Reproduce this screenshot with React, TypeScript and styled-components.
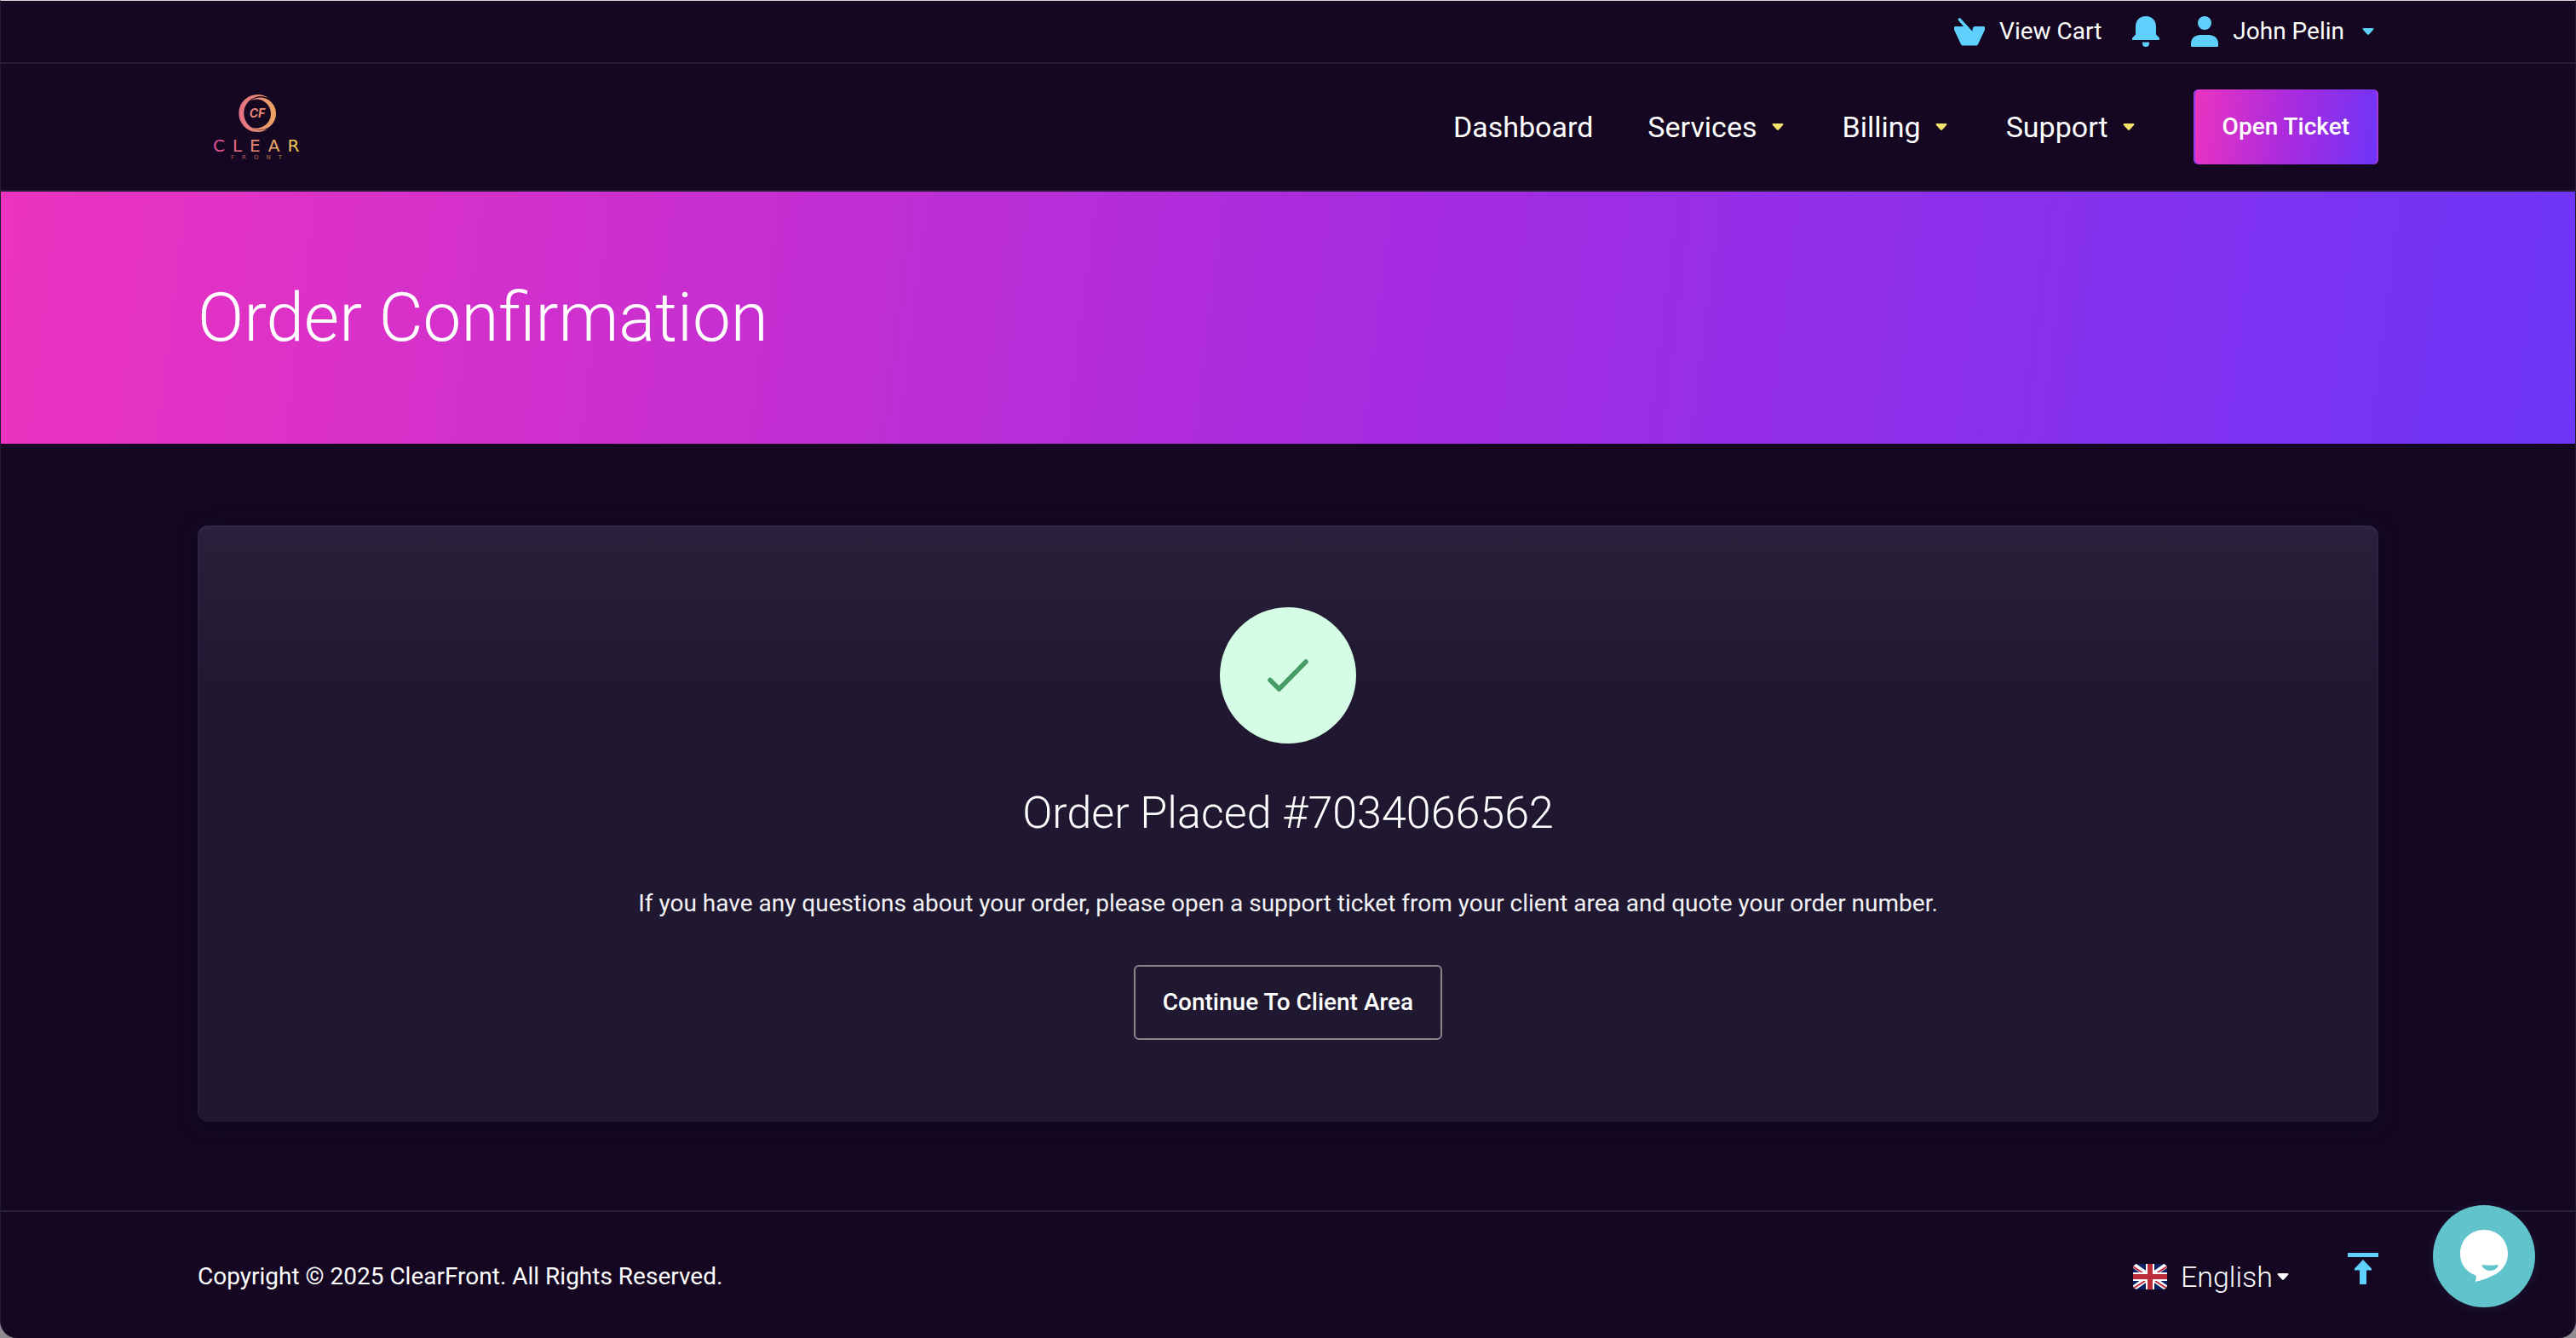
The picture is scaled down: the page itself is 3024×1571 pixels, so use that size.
import React from 'react';
import styled, { createGlobalStyle } from 'styled-components';

const GlobalStyle = createGlobalStyle`
  * { box-sizing: border-box; }
  html { background: #8d8a92; }
  body {
    margin: 0;
    font-family: Roboto, "Liberation Sans", sans-serif;
    font-size: 28px;
    line-height: 40px;
    color: #fff;
    -webkit-font-smoothing: antialiased;
  }
  a { color: inherit; text-decoration: none; }
  button { font: inherit; color: inherit; }
`;

const brandGradient = 'linear-gradient(97deg, #ec33c0 0%, #a62be0 54%, #6e35f8 100%)';

const Page = styled.div`
  display: flex;
  flex-direction: column;
  min-height: 100vh;
  overflow: hidden;
  background: #150722;
  border: 1px solid #251a33;
  border-top-color: #d5d7da;
  border-bottom: 0;
  border-radius: 0 0 20px 20px;
`;

const Container = styled.div`
  display: flex;
  align-items: center;
  width: 100%;
  max-width: 2688px;
  margin: 0 auto;
  padding: 0 64px;
`;

const TopBar = styled.div`
  border-bottom: 2px solid #251b38;
`;

const TopRow = styled(Container)`
  justify-content: flex-end;
  gap: 34px;
  height: 72px;
`;

const TopLink = styled.a`
  display: flex;
  align-items: center;
  gap: 16px;
`;

const TopButton = styled.button`
  display: flex;
  align-items: center;
  gap: 16px;
  padding: 0;
  border: 0;
  background: none;
  cursor: pointer;
`;

const Icon = styled.svg`
  display: block;
  flex: none;
  fill: #5fd0fc;
`;

const Header = styled.header`
  border-bottom: 2px solid #251b38;
`;

const HeaderRow = styled(Container)`
  justify-content: space-between;
  height: 148px;
`;

const LogoLink = styled.a`
  display: block;
  margin-left: 16px;
`;

const LogoSvg = styled.svg`
  display: block;
`;

const Nav = styled.nav`
  display: flex;
  align-items: center;
  gap: 64px;
  font-size: 34px;
`;

const NavLink = styled.a`
  display: flex;
  align-items: center;
  gap: 12px;
`;

const Caret = styled.svg<{ $color: string }>`
  display: block;
  flex: none;
  fill: ${(p) => p.$color};
`;

const TicketButton = styled.button`
  height: 88px;
  padding: 0 34px;
  border: 0;
  border-radius: 6px;
  background: ${brandGradient};
  box-shadow: inset -2px 0 0 #a63bdb, inset 2px 0 0 #8a3ff0;
  font-size: 28px;
  font-weight: 500;
  cursor: pointer;
`;

const Banner = styled.section`
  margin: 0 -1px;
  background: ${brandGradient};
`;

const BannerRow = styled(Container)`
  height: 296px;
`;

const Title = styled.h1`
  margin: 0;
  font-size: 80px;
  line-height: 96px;
  font-weight: 300;
`;

const Main = styled.main`
  display: flex;
  flex-direction: column;
  flex: 1;
  padding: 96px 0 104px;
`;

const Card = styled.section`
  display: flex;
  flex-direction: column;
  align-items: center;
  flex: 1;
  padding: 96px;
  border-radius: 12px;
  background: linear-gradient(180deg, #2a203b 0, #201831 196px, #201831 100%);
  box-shadow: 0 4px 24px #0f0820, inset 0 2px 4px #342b4d;
`;

const CheckCircle = styled.div`
  display: grid;
  place-items: center;
  width: 160px;
  height: 160px;
  border-radius: 50%;
  background: #d5fde5;
`;

const OrderTitle = styled.h2`
  margin: 48px 0 0;
  font-size: 52px;
  line-height: 68px;
  font-weight: 300;
`;

const Note = styled.p`
  margin: 52px 0 0;
  color: #f3f2f5;
`;

const OutlineLink = styled.a`
  display: flex;
  align-items: center;
  height: 88px;
  margin-top: 52px;
  padding: 0 32px;
  border: 2px solid #89878c;
  border-radius: 6px;
  font-weight: 500;
`;

const Footer = styled.footer`
  border-top: 2px solid #251f3b;
`;

const FooterRow = styled(Container)`
  justify-content: space-between;
  height: 148px;
  padding-top: 4px;
`;

const FooterTools = styled.div`
  display: flex;
  align-items: center;
`;

const LanguageButton = styled.button`
  display: flex;
  align-items: center;
  padding: 0;
  border: 0;
  background: none;
  font-size: 34px;
  font-weight: 300;
  cursor: pointer;
`;

const LanguageName = styled.span`
  margin-left: 16px;
`;

const TopArrow = styled.a`
  margin-left: 64px;
  padding-bottom: 18px;
`;

const ChatButton = styled.button`
  position: fixed;
  right: 48px;
  bottom: 36px;
  display: grid;
  place-items: center;
  width: 120px;
  height: 120px;
  padding: 0;
  border: 0;
  border-radius: 50%;
  background: #61c4cd;
  box-shadow: 0 2px 16px rgba(97, 196, 205, 0.08);
  cursor: pointer;
`;

const Down = ({ color = '#f5e56b' }: { color?: string }) => (
  <Caret $color={color} width="24" height="24" viewBox="0 0 24 24" aria-hidden="true">
    <path d="M6.5 8h11q1.500 0 .7 1.800l-5 5.500q-1.200 1-2.400 0l-5-5.500Q5 8 6.500 8z" />
  </Caret>
);

const Logo = () => (
  <LogoSvg width="120" height="96" viewBox="0 0 120 96" role="img" aria-label="ClearFront">
    <defs>
      <linearGradient id="brand" gradientUnits="userSpaceOnUse" x1="0" y1="0" x2="108" y2="0">
        <stop offset="0" stopColor="#e0489f" />
        <stop offset="0.5" stopColor="#eb8d74" />
        <stop offset="1" stopColor="#f0da50" />
      </linearGradient>
      <linearGradient id="ring" gradientUnits="userSpaceOnUse" x1="32" y1="0" x2="76" y2="0">
        <stop offset="0" stopColor="#e56f86" />
        <stop offset="1" stopColor="#eea662" />
      </linearGradient>
    </defs>
    <path fill="url(#ring)" d="M67 14A22 22 0 1 0 67 50A20 20 0 1 1 67 14z" />
    <path fill="url(#ring)" d="M46 17A19 19 0 1 1 46 48A17 17 0 1 0 46 17z" />
    <text x="54" y="37" textAnchor="middle" fontFamily="Inter, sans-serif" fontSize="14" fontStyle="italic" fontWeight="700" fill="url(#ring)">CF</text>
    <text x="2" y="77" fontFamily='"DejaVu Sans", sans-serif' fontSize="20" letterSpacing="9" fill="url(#brand)">CLEAR</text>
    <text x="23" y="86" fontFamily='"DejaVu Sans", sans-serif' fontSize="7" letterSpacing="9" fill="url(#brand)" opacity="0.7">FRONT</text>
  </LogoSvg>
);

const Flag = () => (
  <svg width="40" height="30" viewBox="0 0 40 30" aria-hidden="true">
    <clipPath id="flag"><rect width="40" height="30" rx="5" /></clipPath>
    <g clipPath="url(#flag)">
      <path fill="#0b2265" d="M0 0h40v30H0z" />
      <path stroke="#fff" strokeWidth="6" d="M0 1l40 28M40 1L0 29" />
      <path stroke="#c32c3b" strokeWidth="2" d="M0 3l15 10M40 3L26 12M0 29l14-9M26 20l14 9" />
      <path stroke="#fff" strokeWidth="10" d="M20 0v30M0 15h40" />
      <path stroke="#bd2c3a" strokeWidth="6" d="M20 0v30M0 15h40" />
    </g>
  </svg>
);

const menus = [
  { label: 'Dashboard', more: false },
  { label: 'Services', more: true },
  { label: 'Billing', more: true },
  { label: 'Support', more: true },
];

export default function App() {
  return (
    <Page>
      <GlobalStyle />
      <TopBar>
        <TopRow>
          <TopLink href="#cart">
            <Icon width="38" height="38" viewBox="0 0 38 38" aria-hidden="true">
              <path d="M2 13q-1 0-1 1.500v2.500l8 17q.6 1.500 2 1.500h16q1.400 0 2-1.500l8-17v-2.500q0-1.500-1-1.500H25q-1.500 0-2 2l-.8 3.500L8.500 3.500q-1.200-1-2.300 0t-.2 2.500l6 7z" />
            </Icon>
            View Cart
          </TopLink>
          <TopButton aria-label="Notifications">
            <Icon width="36" height="38" viewBox="0 0 36 38" aria-hidden="true">
              <path d="M18 1C10.500 1 6 6.500 6 13v9.500L2.500 26q-.5.500-.5 1.500V29h32v-1.500q0-1-.5-1.500L30 22.500V13C30 6.500 25.500 1 18 1zM14 31.500h8V33a4 4 0 0 1-8 0z" />
            </Icon>
          </TopButton>
          <TopButton>
            <Icon width="34" height="38" viewBox="0 0 34 38" aria-hidden="true">
              <circle cx="17" cy="9" r="8" />
              <path d="M1 35.500V33c0-6.500 5.500-10 11-10h10c5.500 0 11 3.500 11 10v2.500q0 1.500-1.500 1.500h-29Q1 37 1 35.500z" />
            </Icon>
            John Pelin
            <Down color="#5fd0fc" />
          </TopButton>
        </TopRow>
      </TopBar>

      <Header>
        <HeaderRow>
          <LogoLink href="#home"><Logo /></LogoLink>
          <Nav>
            {menus.map((m) => (
              <NavLink key={m.label} href={`#${m.label.toLowerCase()}`}>
                {m.label}
                {m.more && <Down />}
              </NavLink>
            ))}
            <TicketButton>Open Ticket</TicketButton>
          </Nav>
        </HeaderRow>
      </Header>

      <Banner>
        <BannerRow>
          <Title>Order Confirmation</Title>
        </BannerRow>
      </Banner>

      <Main>
        <Container>
          <Card>
            <CheckCircle>
              <svg width="64" height="64" viewBox="0 0 64 64" fill="none" aria-hidden="true">
                <path d="M11 37.500L21.500 48L53 16" stroke="#459c66" strokeWidth="5.500" strokeLinejoin="round" strokeLinecap="round" />
              </svg>
            </CheckCircle>
            <OrderTitle>Order Placed #7034066562</OrderTitle>
            <Note>If you have any questions about your order, please open a support ticket from your client area and quote your order number.</Note>
            <OutlineLink href="#clientarea">Continue To Client Area</OutlineLink>
          </Card>
        </Container>
      </Main>

      <Footer>
        <FooterRow>
          <span>Copyright © 2025 ClearFront. All Rights Reserved.</span>
          <FooterTools>
            <LanguageButton>
              <Flag />
              <LanguageName>English</LanguageName>
              <Down color="#fff" />
            </LanguageButton>
            <TopArrow href="#top" aria-label="Back to top">
              <Icon width="36" height="38" viewBox="0 0 36 38" aria-hidden="true">
                <path d="M0 0h36v5H0zM18 8l10 10.500v2H22V36q0 1-1 1h-6q-1 0-1-1V20.500H8v-2z" />
              </Icon>
            </TopArrow>
          </FooterTools>
        </FooterRow>
      </Footer>

      <ChatButton aria-label="Open chat">
        <svg width="60" height="64" viewBox="0 0 60 64" aria-hidden="true">
          <path fill="#fff" d="M30 1C14 1 2 13 2 29c0 13 7 21 19 26l-1 7c14-4 38-10 38-33C58 13 46 1 30 1z" />
          <path fill="#61c4cd" d="M27 42q10 1.500 20 0-2 7-10 7-7 0-10-7z" />
        </svg>
      </ChatButton>
    </Page>
  );
}
